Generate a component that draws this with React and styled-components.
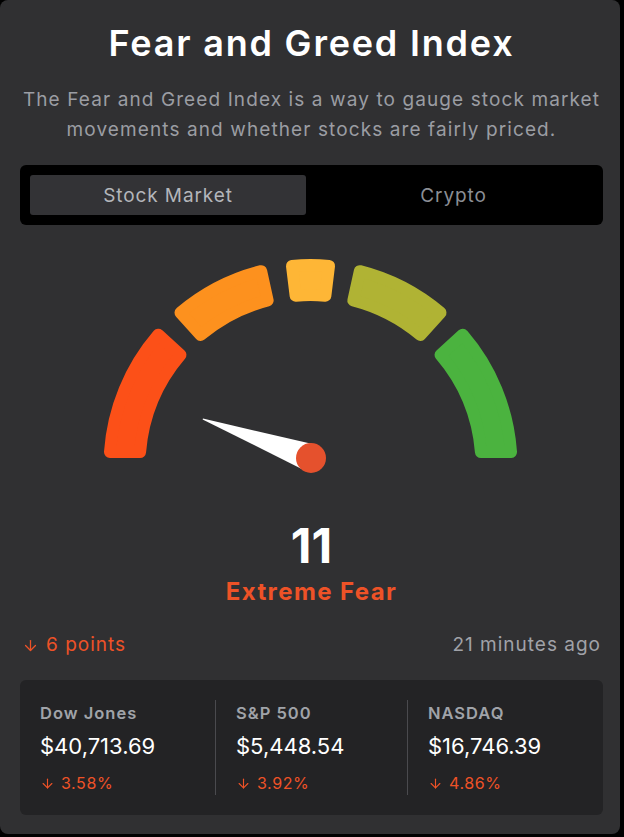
import React from 'react'
import styled, { createGlobalStyle } from 'styled-components'
import { ArrowDown } from 'lucide-react'

const GlobalStyle = createGlobalStyle`
	html, body {
		margin: 0;
		padding: 0;
		background: #000;
	}
	body {
		font-family: Inter, 'Open Sans', sans-serif;
	}
`

const Card = styled.div`
	width: 620px;
	box-sizing: border-box;
	padding: 23px 17px 19px 20px;
	background: #303032;
	border-radius: 8px;
	display: flex;
	flex-direction: column;
`

const Title = styled.h1`
	margin: 0;
	text-align: center;
	color: #fff;
	font-size: 36px;
	line-height: 41px;
	font-weight: 600;
	letter-spacing: 1.8px;
`

const Subtitle = styled.p`
	margin: 21px 0 0;
	text-align: center;
	color: #9b9da3;
	font-size: 19px;
	line-height: 30px;
	letter-spacing: 1.1px;
`

const Tabs = styled.div`
	margin-top: 20px;
	height: 60px;
	box-sizing: border-box;
	padding: 10px;
	background: #000;
	border-radius: 6px;
	display: grid;
	grid-template-columns: 276px 1fr;
`

const Tab = styled.div`
	display: flex;
	align-items: center;
	justify-content: center;
	border-radius: 3px;
	font-size: 19px;
	letter-spacing: 0.9px;
	padding-left: ${(p) => (p.$active ? '0' : '8px')};
	background: ${(p) => (p.$active ? '#333336' : 'transparent')};
	color: ${(p) => (p.$active ? '#b4b6bb' : '#8b8e95')};
`

const GaugeBox = styled.svg`
	display: block;
	margin-top: 20px;
	width: 583px;
	height: 273px;
`

const Score = styled.div`
	text-align: center;
	color: #fff;
	font-size: 48px;
	line-height: 56px;
	font-weight: 700;
`

const Label = styled.div`
	margin-top: 3px;
	text-align: center;
	color: #ee5227;
	font-size: 24px;
	line-height: 30px;
	font-weight: 700;
	letter-spacing: 1.4px;
`

const MetaRow = styled.div`
	margin-top: 26px;
	display: flex;
	justify-content: space-between;
	align-items: center;
	font-size: 19px;
	line-height: 24px;
	padding: 0 2px;
`

const Change = styled.span`
	display: inline-flex;
	align-items: center;
	gap: ${(p) => (p.$small ? '6px' : '7px')};
	color: #ee5227;
	font-size: ${(p) => (p.$small ? '16px' : '19px')};
	line-height: ${(p) => (p.$small ? '20px' : '24px')};
	letter-spacing: ${(p) => (p.$small ? '0.6px' : '1px')};
`

const Ago = styled.span`
	color: #a0a2a8;
	letter-spacing: 1px;
`

const Panel = styled.div`
	margin-top: 23px;
	padding: 20px 0;
	background: #232325;
	border-radius: 6px;
	display: grid;
	grid-template-columns: 195px 192px 1fr;
`

const Market = styled.div`
	padding: 3px 0 0 20px;
	height: 95px;
	box-sizing: border-box;
	border-left: ${(p) => (p.$first ? 'none' : '1px solid #4a4a4e')};
	display: flex;
	flex-direction: column;
`

const MarketName = styled.div`
	color: #a0a3a9;
	font-size: 16.5px;
	line-height: 20px;
	font-weight: 600;
	letter-spacing: 1px;
`

const MarketValue = styled.div`
	margin-top: 9px;
	color: #fff;
	font-size: 22px;
	line-height: 28px;
	letter-spacing: 0px;
`

const MarketChange = styled.div`
	margin-top: 13px;
`

// gauge geometry (svg coords)
const CX = 290.5
const CY = 221
const R_OUT = 207
const R_IN = 165
const CORNER = 6
const deg = Math.PI / 180

const pt = (a, rho) => [CX - rho * Math.cos(a), CY - rho * Math.sin(a)]

const segPath = (a0, a1, d0, d1) => {
	const ro = R_OUT - CORNER
	const ri = R_IN + CORNER
	const s = (rho, d) => Math.asin((d + CORNER) / rho)
	const o0 = pt(a0 * deg + s(ro, d0), ro)
	const o1 = pt(a1 * deg - s(ro, d1), ro)
	const i1 = pt(a1 * deg - s(ri, d1), ri)
	const i0 = pt(a0 * deg + s(ri, d0), ri)
	return `M${o0[0]} ${o0[1]} A${ro} ${ro} 0 0 1 ${o1[0]} ${o1[1]} L${i1[0]} ${i1[1]} A${ri} ${ri} 0 0 0 ${i0[0]} ${i0[1]} Z`
}

const segments = [
	{ a0: 0, a1: 42.5, d0: 8, d1: 0, color: '#fc5018' },
	{ a0: 48, a1: 77.5, d0: 0, d1: 0, color: '#fd911e' },
	{ a0: 83, a1: 97, d0: 0, d1: 0, color: '#feb636' },
	{ a0: 102.5, a1: 132, d0: 0, d1: 0, color: '#b0b334' },
	{ a0: 137.5, a1: 180, d0: 0, d1: 8, color: '#4bb33f' },
]

const Gauge = ({ value }) => {
	const px = 291
	const py = 213
	const a = (value / 100) * 180 * deg
	const len = 115
	const tx = px - len * Math.cos(a)
	const ty = py - len * Math.sin(a)
	const nx = -Math.sin(a)
	const ny = Math.cos(a)
	const needle = [
		[tx + nx * 0.5, ty + ny * 0.5],
		[px + nx * 14, py + ny * 14],
		[px - nx * 14, py - ny * 14],
		[tx - nx * 0.5, ty - ny * 0.5],
	]
		.map((p) => p.join(','))
		.join(' ')

	return (
		<GaugeBox viewBox='0 0 583 273'>
			{segments.map((s) => (
				<path
					key={s.a0}
					d={segPath(s.a0, s.a1, s.d0, s.d1)}
					fill={s.color}
					stroke={s.color}
					strokeWidth={CORNER * 2}
					strokeLinejoin='round'
				/>
			))}
			<polygon points={needle} fill='#fff' />
			<circle cx={px} cy={py} r='15' fill='#e5512d' />
		</GaugeBox>
	)
}

const markets = [
	{ name: 'Dow Jones', value: '$40,713.69', change: '3.58%' },
	{ name: 'S&P 500', value: '$5,448.54', change: '3.92%' },
	{ name: 'NASDAQ', value: '$16,746.39', change: '4.86%' },
]

const App = () => {
	return (
		<>
			<GlobalStyle />
			<Card>
				<Title>Fear and Greed Index</Title>
				<Subtitle>
					The Fear and Greed Index is a way to gauge stock market
					<br />
					movements and whether stocks are fairly priced.
				</Subtitle>
				<Tabs>
					<Tab $active>Stock Market</Tab>
					<Tab>Crypto</Tab>
				</Tabs>
				<Gauge value={11} />
				<Score>11</Score>
				<Label>Extreme Fear</Label>
				<MetaRow>
					<Change>
						<ArrowDown size={17} strokeWidth={1.8} />6 points
					</Change>
					<Ago>21 minutes ago</Ago>
				</MetaRow>
				<Panel>
					{markets.map((m, i) => (
						<Market key={m.name} $first={i === 0}>
							<MarketName>{m.name}</MarketName>
							<MarketValue>{m.value}</MarketValue>
							<MarketChange>
								<Change $small>
									<ArrowDown size={15} strokeWidth={1.8} />
									{m.change}
								</Change>
							</MarketChange>
						</Market>
					))}
				</Panel>
			</Card>
		</>
	)
}

export default App
